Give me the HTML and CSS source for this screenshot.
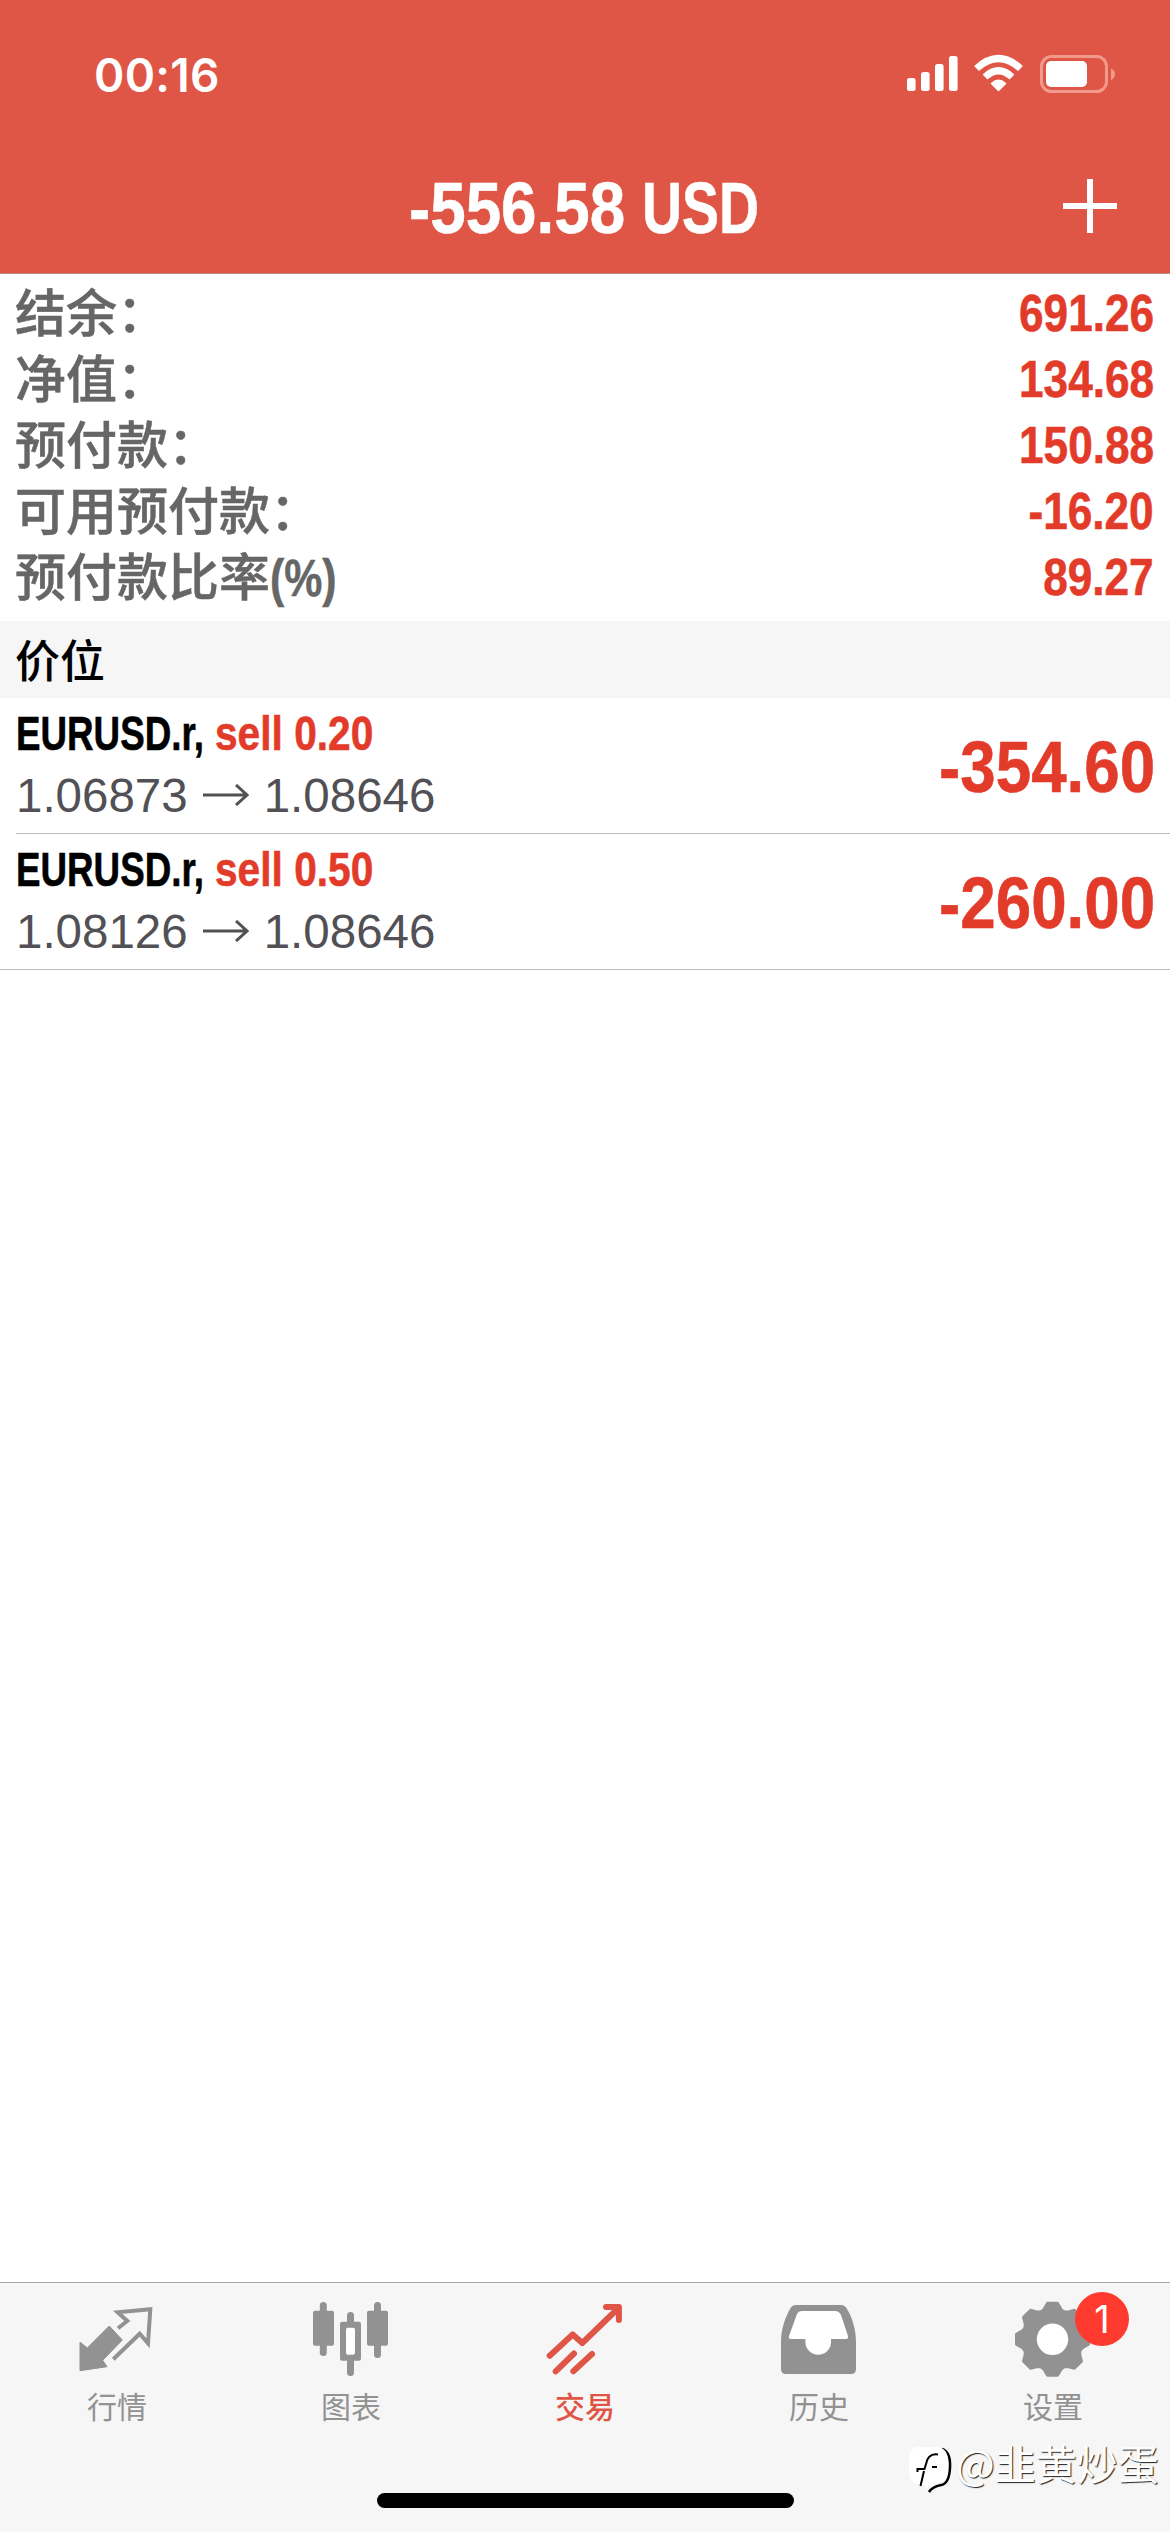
FILE: index.html
```html
<!DOCTYPE html>
<html lang="zh-CN">
<head>
<meta charset="utf-8">
<title>交易</title>
<link rel="stylesheet" href="styles.css">
</head>
<body>
<div class="screen">
  <header class="header">
    <div class="status">
      <span class="clock">00:16</span>
      <svg class="status-icons" viewBox="0 0 212 44" width="212" height="44" fill="#fff">
        <rect x="3" y="29" width="8.6" height="13" rx="2.5"/>
        <rect x="17" y="23" width="8.6" height="19" rx="2.5"/>
        <rect x="31" y="15" width="8.6" height="27" rx="2.5"/>
        <rect x="45" y="7" width="8.6" height="35" rx="2.5"/>
        <path d="M94.500 41.500 L87.500 34.500 Q94.500 28 101.500 34.500Z" stroke="#fff" stroke-width="1.500" stroke-linejoin="round"/>
        <path d="M81 28 Q94.500 15.500 108 28" fill="none" stroke="#fff" stroke-width="7"/>
        <path d="M72.500 19.500 Q94.500 -.5 116.500 19.500" fill="none" stroke="#fff" stroke-width="7"/>
        <rect x="137.500" y="7.500" width="65" height="35" rx="10" fill="none" stroke="#f19a8b" stroke-width="3"/>
        <rect x="142" y="12" width="41" height="26" rx="5"/>
        <path d="M207 19.500 Q211 21 211 25 T207 31Z" fill="#f19a8b"/>
      </svg>
    </div>
    <div class="title-bar">
      <h1 class="title cond"><span class="amount">-556.58</span><span class="currency">USD</span></h1>
      <svg class="plus" viewBox="0 0 54 54" width="54" height="54"><path d="M27 0V54M0 27H54" stroke="#fff" stroke-width="6"/></svg>
    </div>
  </header>
  <main class="content">
    <dl class="summary">
      <div class="line"><dt>结余：</dt><dd class="cond">691.26</dd></div>
      <div class="line"><dt>净值：</dt><dd class="cond">134.68</dd></div>
      <div class="line"><dt>预付款：</dt><dd class="cond">150.88</dd></div>
      <div class="line"><dt>可用预付款：</dt><dd class="cond">-16.20</dd></div>
      <div class="line"><dt>预付款比率<span class="percent">(%)</span></dt><dd class="cond">89.27</dd></div>
    </dl>
    <h2 class="section">价位</h2>
    <div class="trade">
      <div class="info">
        <div class="name"><span class="symbol">EURUSD.r,</span><span class="side">sell 0.20</span></div>
        <div class="prices"><span>1.06873</span><svg class="arrow" viewBox="0 0 46 22" width="46" height="22"><path d="M0 11H44M33 1L44 11L33 21"/></svg><span>1.08646</span></div>
      </div>
      <div class="profit cond">-354.60</div>
    </div>
    <div class="trade last">
      <div class="info">
        <div class="name"><span class="symbol">EURUSD.r,</span><span class="side">sell 0.50</span></div>
        <div class="prices"><span>1.08126</span><svg class="arrow" viewBox="0 0 46 22" width="46" height="22"><path d="M0 11H44M33 1L44 11L33 21"/></svg><span>1.08646</span></div>
      </div>
      <div class="profit cond">-260.00</div>
    </div>
  </main>
  <footer class="footer">
    <nav class="tabs">
      <div class="tab">
        <svg viewBox="0 0 90 90"><path d="M8 46L15.300 52L37.300 30L50.300 44L30.700 64.300L35 70.700L8 74.700Z" fill="currentColor" stroke="currentColor" stroke-linejoin="round"/><path d="M46 32.300L55.300 25L45.700 16.300L78.300 13.300L76 47.300L67.700 37.700L41.300 63.300" fill="none" stroke="currentColor" stroke-width="4"/></svg>
        <span>行情</span>
      </div>
      <div class="tab">
        <svg viewBox="0 0 90 90" fill="currentColor"><rect x="13.800" y="6" width="7" height="54" rx="3.500"/><rect x="7" y="14.700" width="21" height="35" rx="2"/><rect x="41" y="16" width="7" height="64" rx="3.500"/><rect x="34" y="25.700" width="21" height="39" rx="2"/><rect x="40" y="31.700" width="9" height="27" rx="2" fill="#fff"/><rect x="68" y="6" width="7" height="56" rx="3.500"/><rect x="61" y="14.700" width="21" height="35" rx="2"/></svg>
        <span>图表</span>
      </div>
      <div class="tab active">
        <svg viewBox="0 0 90 90" fill="none" stroke="currentColor" stroke-width="6" stroke-linecap="round" stroke-linejoin="round"><path d="M9.700 59.700L32.700 38.500L42.300 47L78 12.500M66 10.900H78.900V24"/><path d="M15.700 75.300L34 57.500M33.300 75.300L52 58"/></svg>
        <span>交易</span>
      </div>
      <div class="tab">
        <svg viewBox="0 0 90 90"><path d="M7 73V46C7 32 12 20 16 13Q18 9 22 9H67Q71 9 73 13C78 21 82 33 82 46V73Q82 78 77 78H12Q7 78 7 73Z" fill="currentColor"/><path d="M23 18Q24.500 15 28 15H61Q65 15 67 19L74 40Q74.500 43 72 43H57V46A12.800 12.800 0 0 1 31.400 46V43H17Q14 43 15 40Z" fill="#fff"/></svg>
        <span>历史</span>
      </div>
      <div class="tab">
        <svg viewBox="0 0 90 90"><g transform="translate(44.500 43.300)" fill="currentColor" stroke="currentColor" stroke-width="3" stroke-linejoin="round"><circle r="28.500"/>
          <path id="teeth" d="M-5 -36H5L8.500 -30L13 -26H-13L-8.500 -30ZM-5 36H5L8.500 30L13 26H-13L-8.500 30Z"/><use href="#teeth" transform="rotate(45)"/><use href="#teeth" transform="rotate(90)"/><use href="#teeth" transform="rotate(135)"/></g><circle cx="44.500" cy="43.300" r="15.700" fill="#fff"/></svg>
        <span>设置</span>
        <b class="badge">1</b>
      </div>
    </nav>
    <div class="home"></div>
  </footer>
  <div class="watermark">
    <svg viewBox="0 0 48 50" width="48" height="50"><path d="M34 3Q43 6 42 22T33 39Q24 41 21 46" fill="none" stroke="#000" stroke-width="2.500"/><path d="M11 1H29Q40 2 40 15V24Q39 37 29 38Q23 38 19 43L16 39Q1 39 1 27V14Q1 1 11 1Z" fill="#fff"/><path d="M30 8.500Q20 7 18 18L16.500 23H9.500V26M16 25L12.500 40M24 21H29" fill="none" stroke="#000" stroke-width="2"/></svg>
    <span>@韭黄炒蛋</span>
  </div>
</div>
</body>
</html>
```
FILE: styles.css
```css
* { box-sizing: border-box; }
body, h1, h2, dl, dd { margin: 0; }
body { background: #fff; font-family: "Liberation Sans", "Noto Sans CJK SC", sans-serif; }
.screen { position: relative; width: 1170px; height: 2532px; display: flex; flex-direction: column; overflow: hidden; }
.header { height: 274px; background: #df5646; color: #fff; border-bottom: 1px solid #bd8a82; }
.status { height: 150px; padding: 0 54px 0 94px; display: flex; justify-content: space-between; }
.clock { margin-top: 46px; font: 600 46px/58px Inter, sans-serif; letter-spacing: 0.3px; }
.status-icons { margin-top: 49px; }
.title-bar { height: 122px; display: grid; grid-template-columns: 1fr auto 1fr; padding-right: 53px; padding-left: 51px; }
.cond { font-family: "Liberation Sans", sans-serif; font-weight: 700; white-space: nowrap; -webkit-text-stroke: 0.6px currentColor; }
.title { grid-column: 2; display: flex; width: 350px; font-size: 72px; line-height: 80px; margin-top: 18px; }
.title span { transform-origin: left; }
.amount { width: 233px; transform: scaleX(.885); }
.currency { width: 117px; transform: scaleX(.77); }
.plus { justify-self: end; margin-top: 29px; }
.content { flex: 1; }
.summary { height: 347px; padding: 8px 16px 0; }
.line { height: 66px; display: flex; justify-content: space-between; line-height: 66px; }
dt { font: 500 51px/66px "Liberation Sans", "Noto Sans CJK SC", sans-serif; color: #666; white-space: nowrap; margin-left: -1px; -webkit-text-stroke: 0.5px #666; }
.percent { display: inline-block; font-weight: 700; transform: scaleX(.84); transform-origin: left; }
dd { font-size: 51px; line-height: 64px; color: #e33b2a; transform: scaleX(.865); transform-origin: right; }
.section { height: 77px; padding-left: 15px; background: #f6f6f6; font: 500 45px/75px "Noto Sans CJK SC", sans-serif; color: #000; }
.trade { height: 136px; margin-left: 16px; padding-right: 15px; border-bottom: 1px solid #bcbcc0; display: flex; justify-content: space-between; }
.trade.last { margin-left: 0; padding-left: 16px; }
.info { padding-top: 7px; }
.name { height: 58px; display: flex; font: 700 49px/56px "Liberation Sans", sans-serif; white-space: nowrap; -webkit-text-stroke: 0.6px currentColor; }
.name span { transform-origin: left; }
.symbol { width: 199px; color: #000; transform: scaleX(.75); }
.side { width: 160px; color: #e33b2a; transform: scaleX(.83); }
.prices { height: 64px; display: flex; align-items: center; gap: 15px; font-size: 47.5px; color: #515155; }
.arrow { fill: none; stroke: #515155; stroke-width: 3; }
.profit { font-size: 72px; line-height: 139px; color: #e33b2a; transform: scaleX(.885); transform-origin: right; }
.footer { height: 250px; background: #f6f6f6; border-top: 1px solid #a8a8aa; }
.tabs { display: grid; grid-template-columns: repeat(5, 1fr); height: 210px; padding-top: 13px; }
.tab { position: relative; display: flex; flex-direction: column; align-items: center; color: #929292; font: 400 30px/39px "Noto Sans CJK SC", sans-serif; }
.tab svg { width: 90px; height: 90px; }
.tab.active { color: #df5646; font-weight: 500; }
.badge { position: absolute; left: 139px; top: -4px; width: 54px; height: 54px; border-radius: 50%; background: #ff3b30; color: #fff; text-align: center; font: 400 38px/54px Inter, sans-serif; }
.home { width: 417px; height: 15px; margin: 0 auto; border-radius: 8px; background: #000; }
.watermark { position: absolute; left: 908px; top: 2446px; display: flex; align-items: flex-start; font: 400 41px/33px "Noto Sans CJK SC", sans-serif; color: #fff; text-shadow: 1px 1px 1px #222; white-space: nowrap; }
```
